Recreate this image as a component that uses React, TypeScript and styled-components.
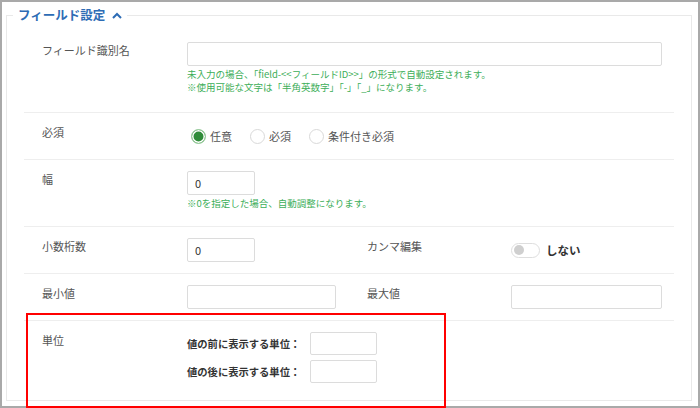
import React from 'react';
import styled, { createGlobalStyle, css } from 'styled-components';

const GlobalStyle = createGlobalStyle`
    body {
        margin: 0;
        font-family: "Noto Sans CJK JP", "Noto Sans", sans-serif;
        color: #555;
    }
`;

const Frame = styled.div`
    position: relative;
    box-sizing: border-box;
    width: 700px;
    height: 408px;
    border: 2px solid #a9a9a9;
    background: #fff;
    padding: 3px 6px 5px 4px;
    display: flex;
    flex-direction: column;
`;

const FieldSet = styled.fieldset`
    flex: 1;
    margin: 0;
    padding: 0;
    border: 1px solid #e9e9e9;
    min-width: 0;
`;

const Legend = styled.legend`
    margin-left: 6px;
    padding: 0 5px;
    display: flex;
    align-items: center;
    gap: 7px;
    font-size: 12.5px;
    line-height: 20px;
    font-weight: 700;
    color: #2d6cb5;

    svg {
        width: 10px;
        height: 7px;
    }
`;

const Rows = styled.div`
    margin: 0 17px;
    padding-top: 6px;
`;

const Row = styled.div<{ $pad?: number }>`
    display: grid;
    grid-template-columns: 145px 180px 144px 1fr;
    align-items: start;
    padding: 11px 12px ${({ $pad }) => $pad ?? 11}px 18px;

    & + & {
        border-top: 1px solid #eee;
    }
`;

const Label = styled.div`
    font-size: 11px;
    line-height: 16px;
    color: #555;
`;

const Control = styled.div<{ $wide?: boolean }>`
    ${({ $wide }) => $wide && css`
        grid-column: 2 / 5;
    `}
`;

const TextInput = styled.input<{ $w?: number; $h?: number }>`
    box-sizing: border-box;
    display: block;
    width: ${({ $w }) => ($w ? `${$w}px` : '100%')};
    height: ${({ $h }) => $h ?? 24}px;
    border: 1px solid #dcdcdc;
    border-radius: 2px;
    padding: 0 7px;
    font-family: inherit;
    font-size: 11px;
    color: #333;
    background: #fff;
    outline: none;
`;

const Help = styled.div`
    margin: 2px 0 5px;
    font-size: 9.5px;
    line-height: 13px;
    color: #3cae58;
    white-space: nowrap;
`;

const RadioGroup = styled.div`
    display: flex;
    align-items: center;
    gap: 18px;
    height: 24px;
    padding-left: 4px;
`;

const RadioOption = styled.label`
    display: flex;
    align-items: center;
    gap: 4px;
    font-size: 11px;
    color: #555;
`;

const RadioDot = styled.span<{ $on?: boolean }>`
    box-sizing: border-box;
    width: 15px;
    height: 15px;
    border-radius: 50%;
    border: 1px solid #d9d9d9;
    background: #fff;
    ${({ $on }) => $on && css`
        border-color: #9fd0a3;
        background: #2f8c39;
        box-shadow: inset 0 0 0 1.5px #fff;
    `}
`;

const Toggle = styled.div`
    display: flex;
    align-items: center;
    gap: 6px;
    height: 24px;
    font-size: 11.5px;
    font-weight: 700;
    color: #333;
`;

const Track = styled.span`
    box-sizing: border-box;
    position: relative;
    width: 29px;
    height: 15px;
    border: 1px solid #dedede;
    border-radius: 8px;
    background: #fff;

    &::after {
        content: '';
        position: absolute;
        left: 2px;
        top: 1.5px;
        width: 10px;
        height: 10px;
        border-radius: 50%;
        background: #cfcfcf;
    }
`;

const UnitGrid = styled.div`
    display: grid;
    grid-template-columns: max-content 67px;
    column-gap: 10px;
    row-gap: 5px;
    align-items: center;
`;

const UnitLabel = styled.span`
    font-size: 10.3px;
    line-height: 14px;
    font-weight: 700;
    color: #333;
`;

const Highlight = styled.div`
    position: absolute;
    left: 24px;
    top: 311px;
    box-sizing: border-box;
    width: 420px;
    height: 95px;
    border: 2px solid #f00;
    pointer-events: none;
`;

const Chevron = () => (
    <svg viewBox="0 0 10 7">
        <polyline points="1,6 5,2 9,6" fill="none" stroke="#2d6cb5" strokeWidth="2" />
    </svg>
);

const requiredOptions = [
    { label: '任意', on: true },
    { label: '必須' },
    { label: '条件付き必須' },
];

export default function App() {
    return (
        <>
            <GlobalStyle />
            <Frame>
                <FieldSet>
                    <Legend>
                        フィールド設定
                        <Chevron />
                    </Legend>
                    <Rows>
                        <Row $pad={13}>
                            <Label>フィールド識別名</Label>
                            <Control $wide>
                                <TextInput $w={475} />
                                <Help>
                                    未入力の場合、「field-&lt;&lt;フィールドID&gt;&gt;」の形式で自動設定されます。
                                    <br />
                                    ※使用可能な文字は「半角英数字」「-」「_」になります。
                                </Help>
                            </Control>
                        </Row>
                        <Row>
                            <Label>必須</Label>
                            <Control $wide>
                                <RadioGroup>
                                    {requiredOptions.map(o => (
                                        <RadioOption key={o.label}>
                                            <RadioDot $on={o.on} />
                                            {o.label}
                                        </RadioOption>
                                    ))}
                                </RadioGroup>
                            </Control>
                        </Row>
                        <Row $pad={11}>
                            <Label>幅</Label>
                            <Control $wide>
                                <TextInput $w={68} defaultValue="0" />
                                <Help>※0を指定した場合、自動調整になります。</Help>
                            </Control>
                        </Row>
                        <Row>
                            <Label>小数桁数</Label>
                            <Control>
                                <TextInput $w={68} defaultValue="0" />
                            </Control>
                            <Label>カンマ編集</Label>
                            <Control>
                                <Toggle>
                                    <Track />
                                    しない
                                </Toggle>
                            </Control>
                        </Row>
                        <Row>
                            <Label>最小値</Label>
                            <Control>
                                <TextInput $w={149} />
                            </Control>
                            <Label>最大値</Label>
                            <Control>
                                <TextInput $w={151} />
                            </Control>
                        </Row>
                        <Row>
                            <Label>単位</Label>
                            <Control $wide>
                                <UnitGrid>
                                    <UnitLabel>値の前に表示する単位：</UnitLabel>
                                    <TextInput $h={23} />
                                    <UnitLabel>値の後に表示する単位：</UnitLabel>
                                    <TextInput $h={23} />
                                </UnitGrid>
                            </Control>
                        </Row>
                    </Rows>
                </FieldSet>
                <Highlight />
            </Frame>
        </>
    );
}
